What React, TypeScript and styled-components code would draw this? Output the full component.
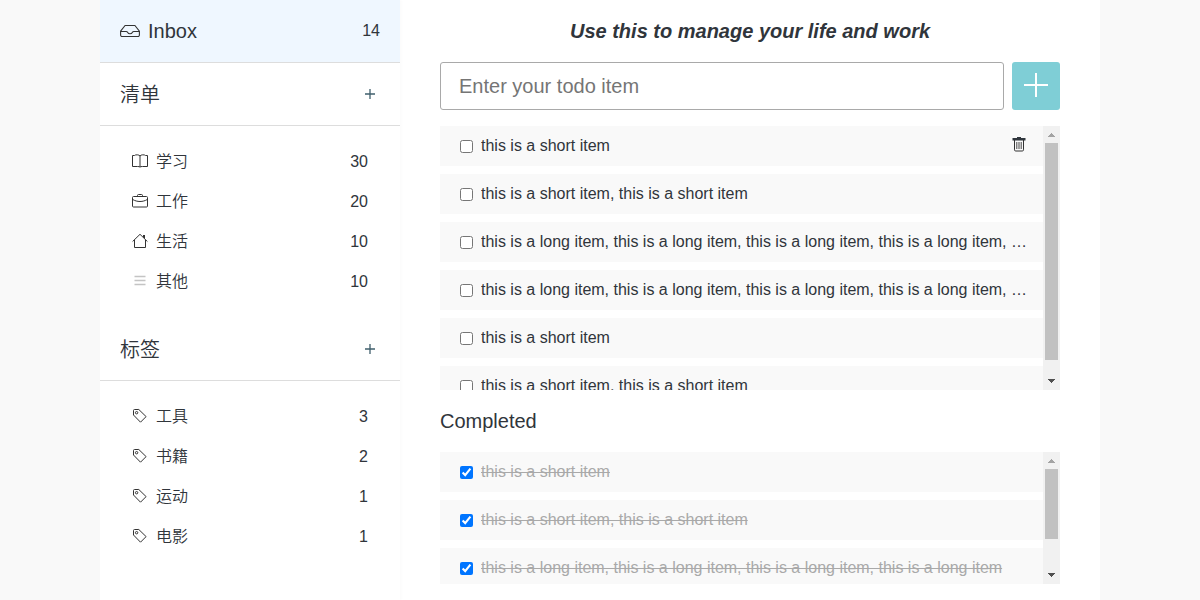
import React from "react";
import styled, { createGlobalStyle } from "styled-components";

const Global = createGlobalStyle`
  * { box-sizing: border-box; }
  body {
    margin: 0;
    background: #f9f9f9;
    color: #30353b;
    font: 16px/24px "Liberation Sans", Arial, "Noto Sans CJK SC", sans-serif;
    overflow: hidden;
  }
`;

const Page = styled.div`
  width: 1000px;
  height: 600px;
  margin: 0 auto;
  display: flex;
  background: #fff;
`;
const Sidebar = styled.aside`
  width: 300px;
  flex: none;
  background: #fff;
  box-shadow: 2px 0 2px rgba(0, 0, 0, 0.015);
`;
const Heading = styled.div<{ $active?: boolean }>`
  height: 63px;
  padding: 0 20px;
  display: flex;
  align-items: center;
  border-bottom: 1px solid #ddd;
  background: ${(p) => (p.$active ? "#eff7ff" : "transparent")};
`;
const HeadingText = styled.span<{ $drop?: number }>`
  flex: 1;
  font-size: 20px;
  font-weight: 350;
  padding-top: ${(p) => p.$drop ?? 0}px;
`;
const IconSlot = styled.span<{ $gap?: number; $lift?: number }>`
  display: flex;
  margin-right: ${(p) => p.$gap ?? 8}px;
  padding-bottom: ${(p) => p.$lift ?? 0}px;
  svg { display: block; }
`;
const AddButton = styled.button`
  width: 20px;
  height: 20px;
  padding: 0;
  border: 0;
  background: none;
  color: #3f5f6c;
  display: flex;
  align-items: center;
  justify-content: center;
`;
const Group = styled.ul`
  list-style: none;
  margin: 0;
  padding: 16px 32px;
`;
const GroupItem = styled.li`
  height: 40px;
  display: flex;
  align-items: center;
`;
const GroupName = styled.span`
  flex: 1;
  font-weight: 350;
`;
const Main = styled.main`
  flex: 1;
  min-width: 0;
  padding: 0 40px;
  display: flex;
  flex-direction: column;
`;
const Title = styled.h1`
  margin: 0;
  height: 62px;
  line-height: 62px;
  font-size: 20px;
  font-style: italic;
  text-align: center;
`;
const Form = styled.div`
  display: flex;
  gap: 8px;
  height: 48px;
  margin-bottom: 16px;
`;
const Input = styled.input`
  flex: 1;
  min-width: 0;
  padding: 0 18px;
  border: 1px solid #a9a9a9;
  border-radius: 3px;
  font: inherit;
  font-size: 20px;
  outline: none;
  &::placeholder { color: #757575; }
`;
const Submit = styled.button`
  width: 48px;
  height: 48px;
  padding: 0 0 2px;
  border: 0;
  border-radius: 3px;
  background: #7fced6;
  display: flex;
  align-items: center;
  justify-content: center;
`;
const Scroller = styled.section<{ $height: number }>`
  height: ${(p) => p.$height}px;
  display: flex;
  overflow: hidden;
`;
const Rows = styled.div`
  flex: 1;
  min-width: 0;
  display: flex;
  flex-direction: column;
  gap: 8px;
`;
const Row = styled.label`
  height: 40px;
  flex: none;
  display: flex;
  align-items: center;
  padding: 0 16px 0 20px;
  background: #f9f9f9;
`;
const Check = styled.input`
  width: 13px;
  height: 13px;
  margin: 1px 8px 0 0;
  flex: none;
`;
const RowText = styled.span<{ $done?: boolean }>`
  flex: 1;
  min-width: 0;
  overflow: hidden;
  white-space: nowrap;
  text-overflow: ellipsis;
  line-height: 24px;
  margin-top: -1px;
  color: ${(p) => (p.$done ? "#a9a9a9" : "inherit")};
  text-decoration: ${(p) => (p.$done ? "line-through" : "none")};
`;
const Bar = styled.div`
  width: 17px;
  flex: none;
  display: flex;
  flex-direction: column;
  align-items: center;
  background: #f1f1f1;
`;
const Arrow = styled.span<{ $down?: boolean }>`
  height: 17px;
  padding: ${(p) => (p.$down ? "0 0 2px" : "1px 0 0")};
  display: flex;
  align-items: center;
`;
const Thumb = styled.span<{ $size: number }>`
  width: 13px;
  height: ${(p) => p.$size}px;
  margin-bottom: auto;
  background: #c1c1c1;
`;
const SubHeading = styled.h2`
  margin: 0;
  height: 62px;
  line-height: 62px;
  font-size: 20px;
  font-weight: 400;
`;

const stroke = { fill: "none", stroke: "#333", strokeWidth: 1 };

const InboxIcon = () => (
  <svg width="20" height="14" viewBox="0 0 20 14" {...stroke} strokeWidth={1.1}>
    <path d="M.6 7.200 5.100 1.500h9.800l4.500 5.700v3.800a1.500 1.500 0 0 1-1.500 1.500H2.100A1.500 1.500 0 0 1 .6 11Z" />
    <path d="M.8 7.500h5.400c.9 0 1.200.4 1.500 1 .4.800 1.100 1.300 2.300 1.300s1.900-.5 2.300-1.300c.3-.6.600-1 1.500-1h5.400" />
  </svg>
);
const BookIcon = () => (
  <svg width="16" height="14" viewBox="0 0 16 14" {...stroke}>
    <path d="M.5 1.500h2c.8-1 4.700-1 5.500.5.800-1.500 4.700-1.500 5.500-.5h2v11h-5c-1.200 0-2 .1-2.500.6-.5-.5-1.300-.6-2.500-.6h-5ZM8 2v11" />
  </svg>
);
const BriefcaseIcon = () => (
  <svg width="16" height="14" viewBox="0 0 16 14" {...stroke}>
    <rect x=".5" y="2.500" width="15" height="10.500" rx="1" />
    <path d="M5.500 2.500v-1a1 1 0 0 1 1-1h3a1 1 0 0 1 1 1v1M.7 5.500c2.300 1.300 4.600 2 7.300 2s5-.7 7.300-2" />
  </svg>
);
const HomeIcon = () => (
  <svg width="16" height="16" viewBox="0 0 16 16" {...stroke}>
    <path d="M.6 8.500 8 1.300l7.400 7.200M2.500 7v7.500h11V7" />
    <path d="M11 2h2v4l-2-2Z" fill="#333" stroke="none" />
  </svg>
);
const LinesIcon = () => (
  <svg width="16" height="12" viewBox="0 0 16 12" fill="none" stroke="#c4c4c4" strokeWidth="1.600">
    <path d="M2.500 1.500h11M2.500 5.500h11M2.500 9.500h11" />
  </svg>
);
const TagIcon = () => (
  <svg width="16" height="16" viewBox="0 0 16 16" {...stroke}>
    <path d="M1.500 2.500a1 1 0 0 1 1-1h4.300l7.300 7.100-5.600 5.600L1.500 7Z" strokeLinejoin="round" />
    <circle cx="4.600" cy="4.700" r="1.200" />
  </svg>
);
const TrashIcon = () => (
  <svg width="14" height="16" viewBox="0 0 14 16">
    <path d="M.5 2H5V1h4v1h4.500v2.500H.5Z" fill="#30363d" />
    <path d="M2.500 4v9.800a1.200 1.200 0 0 0 1.200 1.200h6.600a1.200 1.200 0 0 0 1.200-1.200V4" {...stroke} />
    <path d="M4.800 6v7M7 6v7M9.200 6v7" {...stroke} strokeWidth={0.9} />
  </svg>
);

const lists = [
  { name: "学习", count: 30, icon: <BookIcon /> },
  { name: "工作", count: 20, icon: <BriefcaseIcon /> },
  { name: "生活", count: 10, icon: <HomeIcon /> },
  { name: "其他", count: 10, icon: <LinesIcon /> },
];
const tags = [
  { name: "工具", count: 3, icon: <TagIcon /> },
  { name: "书籍", count: 2, icon: <TagIcon /> },
  { name: "运动", count: 1, icon: <TagIcon /> },
  { name: "电影", count: 1, icon: <TagIcon /> },
];

const short = "this is a short item";
const long = "this is a long item";
const repeat = (s: string, n: number) => Array(n).fill(s).join(", ");
const todos = [short, repeat(short, 2), repeat(long, 6), repeat(long, 6), short, repeat(short, 2)];
const completed = [short, repeat(short, 2), repeat(long, 4)];

function SidebarGroup({ title, items }: { title: string; items: typeof lists }) {
  return (
    <>
      <Heading>
        <HeadingText $drop={2}>{title}</HeadingText>
        <AddButton aria-label="Add">
          <svg width="10" height="10" viewBox="0 0 10 10" stroke="currentColor" strokeWidth="1.300">
            <path d="M0 5h10M5 0v10" />
          </svg>
        </AddButton>
      </Heading>
      <Group>
        {items.map((item) => (
          <GroupItem key={item.name}>
            <IconSlot $lift={2}>{item.icon}</IconSlot>
            <GroupName>{item.name}</GroupName>
            <span>{item.count}</span>
          </GroupItem>
        ))}
      </Group>
    </>
  );
}

function TodoList({ items, done, height, thumb }: { items: string[]; done?: boolean; height: number; thumb: number }) {
  return (
    <Scroller $height={height}>
      <Rows>
        {items.map((text, i) => (
          <Row key={i}>
            <Check type="checkbox" defaultChecked={done} />
            <RowText $done={done}>{text}</RowText>
            {!done && i === 0 && <IconSlot $gap={1} $lift={4}><TrashIcon /></IconSlot>}
          </Row>
        ))}
      </Rows>
      <Bar>
        <Arrow>
          <svg width="7" height="4" viewBox="0 0 7 4" shapeRendering="crispEdges">
            <path d="M0 4 3.500 0 7 4Z" fill="#a3a3a3" />
          </svg>
        </Arrow>
        <Thumb $size={thumb} />
        <Arrow $down>
          <svg width="7" height="4" viewBox="0 0 7 4" shapeRendering="crispEdges">
            <path d="M0 0h7L3.500 4Z" fill="#505050" />
          </svg>
        </Arrow>
      </Bar>
    </Scroller>
  );
}

export default function App() {
  return (
    <>
      <Global />
      <Page>
        <Sidebar>
          <Heading $active>
            <IconSlot><InboxIcon /></IconSlot>
            <HeadingText>Inbox</HeadingText>
            <span>14</span>
          </Heading>
          <SidebarGroup title="清单" items={lists} />
          <SidebarGroup title="标签" items={tags} />
        </Sidebar>
        <Main>
          <Title>Use this to manage your life and work</Title>
          <Form>
            <Input placeholder="Enter your todo item" />
            <Submit aria-label="Add todo">
              <svg width="24" height="24" viewBox="0 0 24 24" stroke="#fff" strokeWidth="2">
                <path d="M0 12h24M12 0v24" />
              </svg>
            </Submit>
          </Form>
          <TodoList items={todos} height={264} thumb={217} />
          <SubHeading>Completed</SubHeading>
          <TodoList items={completed} done height={132} thumb={70} />
        </Main>
      </Page>
    </>
  );
}
